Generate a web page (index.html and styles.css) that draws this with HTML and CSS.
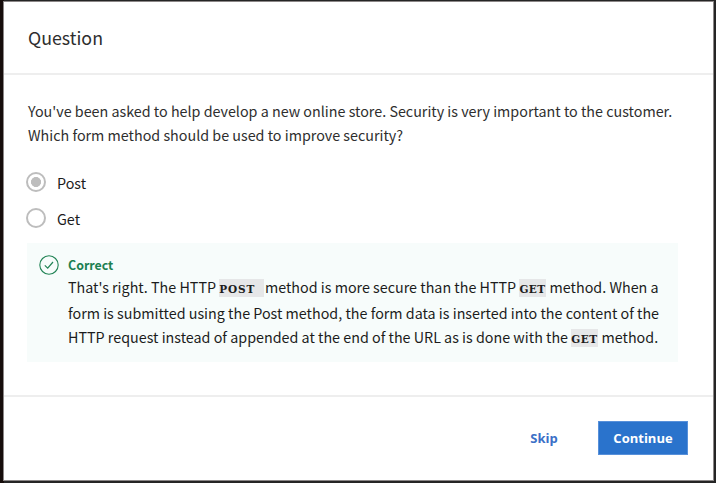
FILE: index.html
```html
<!DOCTYPE html>
<html lang="en">
<head>
<meta charset="utf-8">
<title>Question</title>
<link rel="stylesheet" href="styles.css">
</head>
<body>
<main class="dialog">
  <header class="dialog-header"><h1>Question</h1></header>
  <section class="dialog-body">
    <p class="prompt"><span class="line">You've been asked to help develop a new online store. Security is very important to the customer.</span> <span class="line">Which form method should be used to improve security?</span></p>
    <div class="options">
      <div class="option"><span class="radio selected"></span><span class="label">Post</span></div>
      <div class="option"><span class="radio"></span><span class="label">Get</span></div>
    </div>
    <div class="feedback">
      <svg class="check" viewBox="0 0 20 20" fill="none" stroke="#238456"><circle cx="10" cy="10" r="9.2" stroke-width="1.1"/><path d="M5.8 10.4 8.7 13.2 14 7" stroke-width="1.2"/></svg>
      <div class="feedback-text">
        <h2>Correct</h2>
        <p><span class="line first">That's right. The HTTP <code class="post">POST </code><span class="tight"> method is more secure than the HTTP </span><code>GET</code> method. When a</span> <span class="line">form is submitted using the Post method, the form data is inserted into the content of the</span> <span class="line">HTTP request instead of appended at the end of the URL as is done with the <code>GET</code> method.</span></p>
      </div>
    </div>
  </section>
  <footer class="dialog-footer">
    <button class="skip">Skip</button>
    <button class="continue">Continue</button>
  </footer>
</main>
</body>
</html>
```
FILE: styles.css
```css
* { box-sizing: border-box; }
body {
  margin: 0;
  width: 716px;
  height: 483px;
  padding: 1px 2px 2px 3px;
  overflow: hidden;
  background: linear-gradient(90deg, #160d0b 0 4px, #252525 4px);
  color: #2e2e2e;
  font: 14.32px/24px "Noto Sans CJK SC", "Noto Sans", sans-serif;
}
h1, h2, p { margin: 0; }
.dialog {
  display: flex;
  flex-direction: column;
  height: 480px;
  border: 1px solid #8b8787;
  background: #fff;
}
.dialog-header {
  height: 73px;
  padding: 19px 24px 0;
  border-bottom: 2px solid #eeeeee;
}
h1 { font-size: 17.8px; line-height: 32px; font-weight: 400; }
.dialog-body { height: 320px; padding: 24px 24px 0 23px; }
.line { display: block; height: 24px; white-space: nowrap; }
.line.first { height: 26px; }
.prompt { margin-left: 1px; }
.options { margin-top: 17px; }
.option { display: flex; align-items: center; height: 36px; gap: 11px; color: #1c1c1c; }
.label { padding-top: 1px; }
.radio {
  width: 20px;
  height: 20px;
  margin-left: -1px;
  border: 2px solid #bdbdbd;
  border-radius: 50%;
}
.selected { background: radial-gradient(circle, #bdbdbd 0 4.7px, transparent 5.3px); }
.feedback {
  display: flex;
  width: 651px;
  height: 119px;
  margin-top: 7px;
  padding: 12px 12px;
  background: #f7fcfb;
  gap: 9px;
  color: #1c1c1c;
}
.check { width: 20px; height: 20px; flex: none; }
h2 { font-size: 12.4px; line-height: 20px; color: #1d8052; font-weight: 700; }
code {
  display: inline-block;
  width: 27px;
  height: 18px;
  margin-top: 4px;
  line-height: 18px;
  background: #e6e7e8;
  font-family: "DejaVu Serif", serif;
  font-size: 10.5px;
  font-weight: 700;
  letter-spacing: 0.5px;
  white-space: pre;
  vertical-align: top;
  padding-top: 1px;
}
.post { width: 45px; letter-spacing: 0.9px; }
.tight { margin-left: -2.5px; }
.dialog-footer {
  display: flex;
  flex: 1;
  justify-content: flex-end;
  align-items: flex-start;
  padding: 24px 25px 0;
  border-top: 2px solid #eeeeee;
}
button {
  height: 34px;
  padding: 0;
  border: 0;
  background: none;
  font: 700 13px/34px "Open Sans", sans-serif;
}
.skip { width: 108px; color: #3b70c7; }
.continue { width: 90px; background: #2a73cc; border: 1px solid #5790da; line-height: 32px; color: #fff; }
```
